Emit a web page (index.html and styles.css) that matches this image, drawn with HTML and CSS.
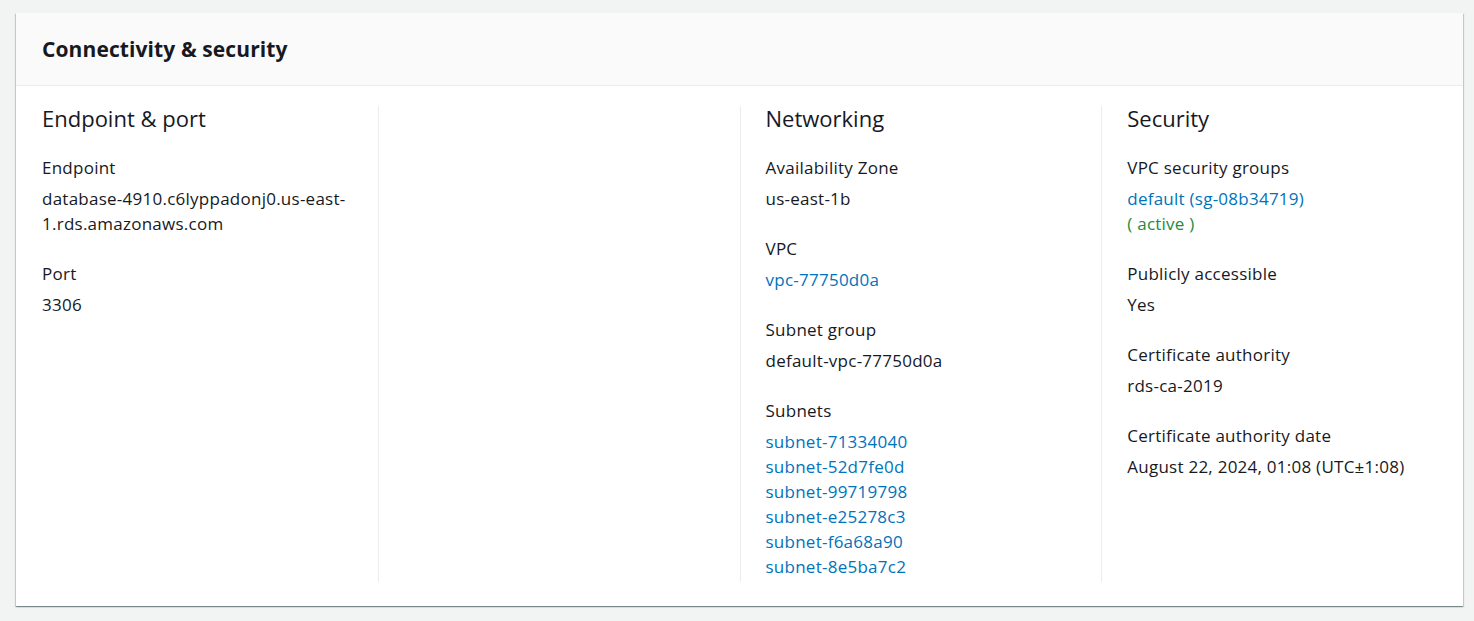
FILE: index.html
```html
<!DOCTYPE html>
<html lang="en">
<head>
<meta charset="utf-8">
<title>Connectivity &amp; security</title>
<link rel="stylesheet" href="styles.css">
</head>
<body>
<div class="page">
  <section class="panel">
    <header class="panel-header">
      <h2 class="panel-title">Connectivity &amp; security</h2>
    </header>
    <div class="panel-body">
      <div class="col">
        <h3 class="col-title">Endpoint &amp; port</h3>
        <div class="field">
          <div class="label">Endpoint</div>
          <div class="value">database-4910.c6lyppadonj0.us-east-1.rds.amazonaws.com</div>
        </div>
        <div class="field">
          <div class="label">Port</div>
          <div class="value">3306</div>
        </div>
      </div>
      <div class="col"></div>
      <div class="col">
        <h3 class="col-title">Networking</h3>
        <div class="field">
          <div class="label">Availability Zone</div>
          <div class="value">us-east-1b</div>
        </div>
        <div class="field">
          <div class="label">VPC</div>
          <div class="value"><a class="link" href="#">vpc-77750d0a</a></div>
        </div>
        <div class="field">
          <div class="label">Subnet group</div>
          <div class="value">default-vpc-77750d0a</div>
        </div>
        <div class="field">
          <div class="label">Subnets</div>
          <div class="value list">
            <a class="link" href="#">subnet-71334040</a>
            <a class="link" href="#">subnet-52d7fe0d</a>
            <a class="link" href="#">subnet-99719798</a>
            <a class="link" href="#">subnet-e25278c3</a>
            <a class="link" href="#">subnet-f6a68a90</a>
            <a class="link" href="#">subnet-8e5ba7c2</a>
          </div>
        </div>
      </div>
      <div class="col">
        <h3 class="col-title">Security</h3>
        <div class="field">
          <div class="label">VPC security groups</div>
          <div class="value list">
            <a class="link" href="#">default (sg-08b34719)</a>
            <span class="status">( active )</span>
          </div>
        </div>
        <div class="field">
          <div class="label">Publicly accessible</div>
          <div class="value">Yes</div>
        </div>
        <div class="field">
          <div class="label">Certificate authority</div>
          <div class="value">rds-ca-2019</div>
        </div>
        <div class="field">
          <div class="label">Certificate authority date</div>
          <div class="value">August 22, 2024, 01:08 (UTC±1:08)</div>
        </div>
      </div>
    </div>
  </section>
</div>
</body>
</html>
```

FILE: styles.css
```css
html, body {
  margin: 0;
  padding: 0;
}
body {
  background: #f2f3f3;
  font-family: "Open Sans", "Noto Sans", Arial, sans-serif;
  color: #16191f;
  font-size: 17px;
  line-height: 25px;
}
.page {
  padding: 13px 11px 15px 16px;
}
.panel {
  background: #ffffff;
  box-shadow: 0 1px 1px 0 rgba(0, 28, 36, 0.3), 1px 1px 1px 0 rgba(0, 28, 36, 0.15), -1px 1px 1px 0 rgba(0, 28, 36, 0.15);
}
.panel-header {
  background: #fafafa;
  border-bottom: 1px solid #eaeded;
  padding: 24px 26px 23px;
}
.panel-title {
  margin: 0;
  font-size: 21px;
  line-height: 25px;
  font-weight: 700;
  letter-spacing: 0.1px;
}
.panel-body {
  display: grid;
  grid-template-columns: repeat(4, 1fr);
  padding: 20px 0 24px;
}
.col {
  padding: 0 20px 3px 25px;
  border-left: 1px solid #eaeded;
  display: flex;
  flex-direction: column;
  gap: 25px;
}
.col:first-child {
  border-left-color: transparent;
}
.col-title {
  margin: 0;
  font-size: 22px;
  line-height: 24px;
  font-weight: 400;
}
.field {
  display: flex;
  flex-direction: column;
  gap: 6px;
}
.label, .value {
  font-size: 17px;
  line-height: 25px;
  letter-spacing: 0.25px;
}
.list {
  display: flex;
  flex-direction: column;
}
.link {
  color: #0073bb;
  text-decoration: none;
}
.status {
  color: #1d8c3c;
}
```
